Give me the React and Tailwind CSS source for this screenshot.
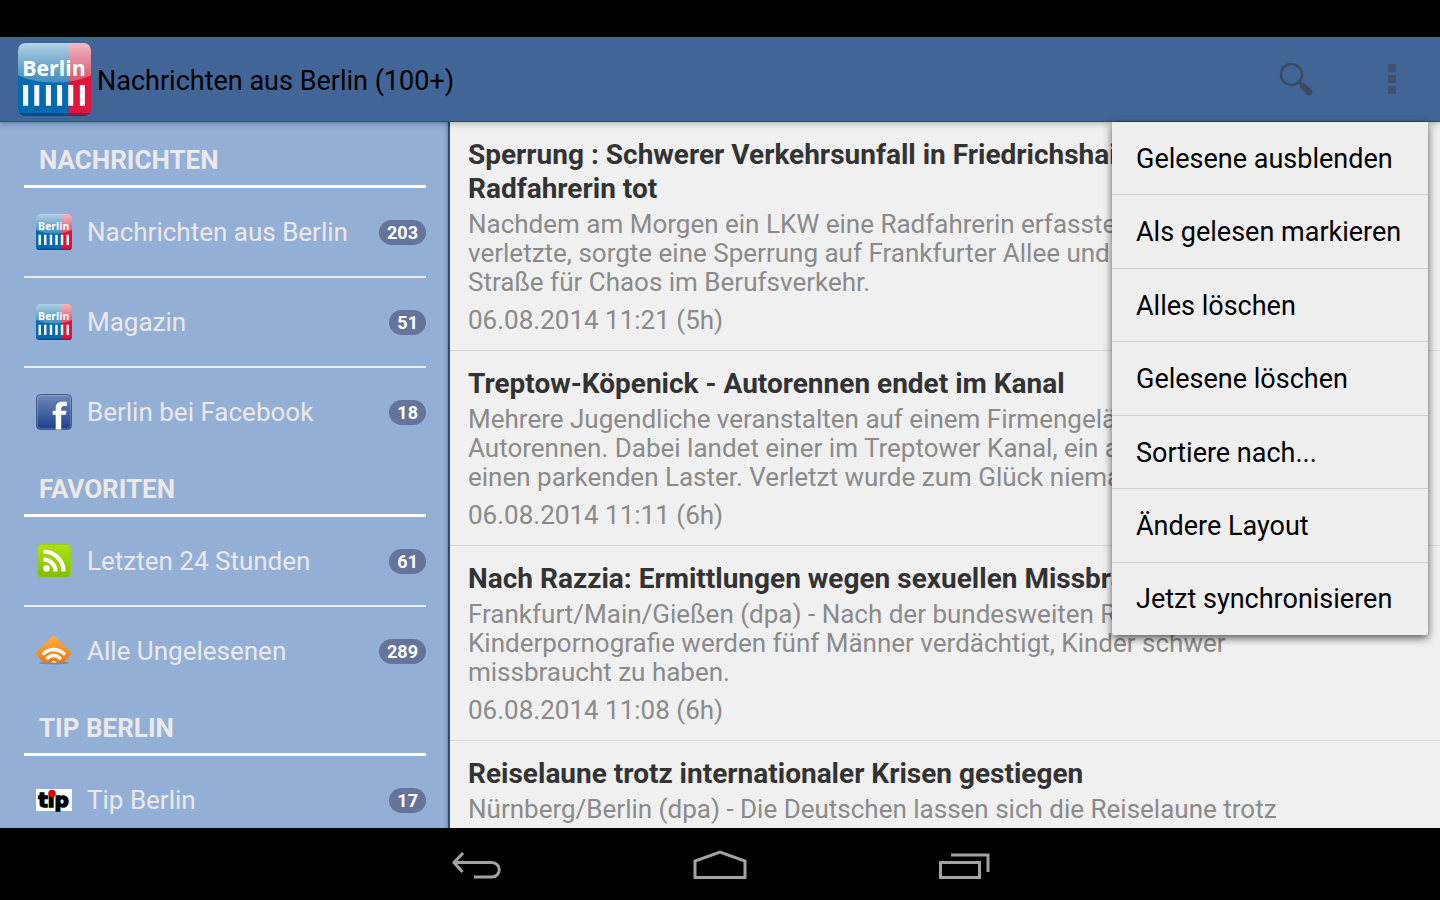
import React from 'react';

const sections = [
	{
		title: 'NACHRICHTEN',
		items: [
			{ name: 'Nachrichten aus Berlin', count: 203, icon: 'berlin' },
			{ name: 'Magazin', count: 51, icon: 'berlin' },
			{ name: 'Berlin bei Facebook', count: 18, icon: 'facebook' },
		],
	},
	{
		title: 'FAVORITEN',
		items: [
			{ name: 'Letzten 24 Stunden', count: 61, icon: 'rss' },
			{ name: 'Alle Ungelesenen', count: 289, icon: 'unread' },
		],
	},
	{
		title: 'TIP BERLIN',
		items: [{ name: 'Tip Berlin', count: 17, icon: 'tip' }],
	},
];

const articles = [
	{
		title: ['Sperrung : Schwerer Verkehrsunfall in Friedrichshain -', 'Radfahrerin tot'],
		text: [
			'Nachdem am Morgen ein LKW eine Radfahrerin erfasste',
			'verletzte, sorgte eine Sperrung auf Frankfurter Allee und P',
			'Straße für Chaos im Berufsverkehr.',
		],
		date: '06.08.2014 11:21 (5h)',
	},
	{
		title: ['Treptow-Köpenick - Autorennen endet im Kanal'],
		text: [
			'Mehrere Jugendliche veranstalten auf einem Firmengelände',
			'Autorennen. Dabei landet einer im Treptower Kanal, ein an',
			'einen parkenden Laster. Verletzt wurde zum Glück niemand.',
		],
		date: '06.08.2014 11:11 (6h)',
	},
	{
		title: ['Nach Razzia: Ermittlungen wegen sexuellen Missbrauchs'],
		text: [
			'Frankfurt/Main/Gießen (dpa) - Nach der bundesweiten Razzia',
			'Kinderpornografie werden fünf Männer verdächtigt, Kinder schwer',
			'missbraucht zu haben.',
		],
		date: '06.08.2014 11:08 (6h)',
	},
	{
		title: ['Reiselaune trotz internationaler Krisen gestiegen'],
		text: ['Nürnberg/Berlin (dpa) - Die Deutschen lassen sich die Reiselaune trotz'],
	},
];

const menuItems = [
	'Gelesene ausblenden',
	'Als gelesen markieren',
	'Alles löschen',
	'Gelesene löschen',
	'Sortiere nach...',
	'Ändere Layout',
	'Jetzt synchronisieren',
];

const BerlinLogo = ({ id, className }) => (
	<svg viewBox="0 0 72 72" className={className} aria-hidden="true">
		<defs>
			<clipPath id={`${id}-clip`}>
				<rect width="72" height="72" rx="7" />
			</clipPath>
			<linearGradient id={`${id}-gloss`} x1="0" y1="0" x2="0" y2="1">
				<stop offset="0" stopColor="#fff" stopOpacity="0.7" />
				<stop offset="1" stopColor="#c8dcd8" stopOpacity="0.32" />
			</linearGradient>
		</defs>
		<g clipPath={`url(#${id}-clip)`}>
			<rect width="72" height="72" fill="#0569b0" />
			<rect x="50" width="22" height="72" fill="#e1143c" />
			<path d="M0 0H72V32Q56 39 36 39Q16 39 0 32Z" fill={`url(#${id}-gloss)`} />
			<path d="M0 70.5H72" stroke="#03325c" strokeOpacity="0.5" strokeWidth="3" />
			<path d="M7.5 41.5V62M18.5 41.5V62M30 41.5V62M41 41.5V62M52 41.5V62M63.500 41.5V62" stroke="#f4f8fb" strokeWidth="5" />
			<text x="35.500" y="32.500" textAnchor="middle" fontFamily="Open Sans, sans-serif" fontWeight="700" fontSize="21" fill="#fff">
				Berlin
			</text>
		</g>
	</svg>
);

const FacebookIcon = () => (
	<svg viewBox="0 0 36 36" className="size-9" aria-hidden="true">
		<defs>
			<linearGradient id="fb" x1="0" y1="0" x2="0" y2="1">
				<stop offset="0" stopColor="#7189bb" />
				<stop offset="1" stopColor="#1c3f88" />
			</linearGradient>
		</defs>
		<rect x="0.500" y="0.500" width="35" height="35" rx="4" fill="url(#fb)" stroke="#40598f" />
		<rect x="1.500" y="1.500" width="33" height="33" rx="3" fill="none" stroke="#fff" strokeOpacity="0.2" />
		<path d="M19.700 35.500V20.700H16.700V16.700H19.700V14.500C19.700 9.800 22 7.800 26 7.800H30.800V12H28C26 12 25.200 12.800 25.200 14.800V16.700H30.500L29.800 20.700H25.200V35.500Z" fill="#fff" />
	</svg>
);

const RssIcon = () => (
	<svg viewBox="0 0 36 36" className="size-9" aria-hidden="true">
		<defs>
			<linearGradient id="rss" x1="0" y1="0" x2="0" y2="1">
				<stop offset="0" stopColor="#b0e018" />
				<stop offset="1" stopColor="#82bd00" />
			</linearGradient>
		</defs>
		<rect x="1.500" y="1.500" width="33" height="33" rx="4" fill="url(#rss)" stroke="#97d010" />
		<circle cx="10.500" cy="25.500" r="3.200" fill="#fff" />
		<path d="M7.500 16.500A12 12 0 0 1 19.500 28.500M7.500 8.500A20 20 0 0 1 27.500 28.500" fill="none" stroke="#fff" strokeWidth="4.200" />
	</svg>
);

const UnreadIcon = () => (
	<svg viewBox="0 0 36 36" className="size-9" aria-hidden="true">
		<defs>
			<linearGradient id="unread" x1="0" y1="0" x2="0" y2="1">
				<stop offset="0" stopColor="#fbb040" />
				<stop offset="1" stopColor="#ee7a14" />
			</linearGradient>
		</defs>
		<ellipse cx="18" cy="30" rx="15" ry="1.500" fill="#40506a" fillOpacity="0.4" />
		<path d="M15.500 4Q17.500 2 19.500 4L34 18.500Q36 20.500 34 22.500L29 28Q27.500 29.500 25.500 29.500H9.500Q7.500 29.500 6 28L1 22.500Q-1 20.500 1 18.500Z" fill="url(#unread)" />
		<path d="M6.500 21.500Q17.500 11.500 29 21.500M10.500 26Q17.500 19 25 26" fill="none" stroke="#fff" strokeWidth="3.200" />
		<path d="M15 29.500Q17.500 26 20.500 29.500Z" fill="#fff" />
	</svg>
);

const TipIcon = () => (
	<svg viewBox="0 0 36 36" className="size-9" aria-hidden="true">
		<rect y="7" width="36" height="22" fill="#fff" />
		<text x="17.500" y="25" textAnchor="middle" fontFamily="DejaVu Sans, sans-serif" fontWeight="700" fontSize="20" stroke="#000" strokeWidth="1.400">
			tıp
		</text>
		<circle cx="16" cy="11.500" r="3.800" fill="#e60000" />
	</svg>
);

const ItemIcon = ({ type, id }) => {
	if (type === 'facebook') return <FacebookIcon />;
	if (type === 'rss') return <RssIcon />;
	if (type === 'unread') return <UnreadIcon />;
	if (type === 'tip') return <TipIcon />;
	return <BerlinLogo id={id} className="size-9" />;
};

const Header = () => (
	<header className="relative z-10 flex h-[85px] shrink-0 items-center border-b border-[#1d4a85] bg-[#406596] pl-[18px] shadow-[0_2px_6px_rgba(0,0,0,0.25)]">
		<BerlinLogo id="app" className="size-[73px]" />
		<h1 className="ml-1.5 flex-1 pt-1 text-[27px] text-black">Nachrichten aus Berlin (100+)</h1>
		<button type="button" aria-label="Suche" className="flex h-full w-24 items-center justify-center">
			<svg viewBox="0 0 34 34" className="size-[34px]" fill="none" stroke="#3b4a60">
				<circle cx="12.500" cy="12.500" r="10.500" strokeWidth="2.400" />
				<path d="M20 20L24 24" strokeWidth="3" />
				<path d="M24.500 24.500L30 30" strokeWidth="6.500" strokeLinejoin="round" strokeLinecap="round" />
			</svg>
		</button>
		<button type="button" aria-label="Weitere Optionen" className="flex h-full w-24 flex-col items-center justify-center gap-[3px]">
			<span className="size-2 bg-[#40526f]" />
			<span className="size-2 bg-[#40526f]" />
			<span className="size-2 bg-[#40526f]" />
		</button>
	</header>
);

const Sidebar = () => (
	<nav className="w-[450px] shrink-0 overflow-hidden border-r-2 border-[#2a4d7c] bg-[#93afd5] pl-6 pr-[22px] pt-[5px] text-[#ece8ea] shadow-[inset_-3px_0_4px_-2px_rgba(30,60,110,0.4)]">
		{sections.map((section) => (
			<section key={section.title}>
				<h2 className="flex h-[61px] items-center border-b-3 border-white px-[15px] pt-2 text-[26px] font-bold">
					{section.title}
				</h2>
				<ul className="divide-y-2 divide-[#e9eef6]">
					{section.items.map((item) => (
						<li key={item.name}>
							<a href="#" className="flex h-[88px] items-center pl-3">
								<ItemIcon type={item.icon} id={item.name.split(' ')[0]} />
								<span className="ml-[15px] flex-1 text-[26px]">{item.name}</span>
								<span className="rounded-full bg-[#66739a] px-2 text-[18px] leading-[25px] font-bold text-white">
									{item.count}
								</span>
							</a>
						</li>
					))}
				</ul>
			</section>
		))}
	</nav>
);

const Article = ({ article }) => (
	<article className="border-b border-[#d6d6d6] px-[18px] pt-4 pb-[15px]">
		<h3 className="text-[28px] leading-[34px] font-bold text-[#333]">
			{article.title.map((line) => (
				<span key={line} className="block whitespace-nowrap">{line}</span>
			))}
		</h3>
		<p className="mt-1 text-[26px] leading-[29px] text-[#8a8a8a]">
			{article.text.map((line) => (
				<span key={line} className="block whitespace-nowrap">{line}</span>
			))}
		</p>
		{article.date && <p className="mt-[9px] text-[26px] leading-[29px] text-[#8a8a8a]">{article.date}</p>}
	</article>
);

const OptionsMenu = () => (
	<ul className="absolute top-0 right-3 z-20 flex h-[513px] w-[316px] flex-col divide-y divide-[#cfcfcf] rounded-b-xs bg-[#eee] shadow-[0_3px_8px_rgba(0,0,0,0.65)]">
		{menuItems.map((item) => (
			<li key={item} className="flex flex-1">
				<button type="button" className="flex w-full items-center px-6 pt-0.5 text-left text-[27px] whitespace-nowrap text-black">
					{item}
				</button>
			</li>
		))}
	</ul>
);

const NavigationBar = () => (
	<footer className="flex h-[72px] shrink-0 items-center justify-center gap-[190px] bg-black text-[#a3a3a3]">
		<button type="button" aria-label="Zurück">
			<svg viewBox="0 0 54 34" className="h-[34px] w-[54px]" fill="none" stroke="currentColor" strokeWidth="3">
				<path d="M5 15.500H43A7.250 7.250 0 0 1 43 30H25M14 6L5 15.500L13.500 25" />
			</svg>
		</button>
		<button type="button" aria-label="Startseite">
			<svg viewBox="0 0 54 34" className="h-[34px] w-[54px]" fill="none" stroke="currentColor" strokeWidth="3">
				<path d="M2 30.500V14L27 5L52 14V30.500Z" />
			</svg>
		</button>
		<button type="button" aria-label="Letzte Apps">
			<svg viewBox="0 0 54 34" className="h-[34px] w-[54px]" fill="none" stroke="currentColor" strokeWidth="3">
				<path d="M3.500 15.500H42.500V30.500H3.500ZM14 8H51V25" />
			</svg>
		</button>
	</footer>
);

const App = () => (
	<div className="flex h-screen flex-col overflow-hidden bg-black pt-[37px] font-['Roboto',sans-serif]">
		<Header />
		<div className="relative flex min-h-0 flex-1">
			<Sidebar />
			<main className="min-w-0 flex-1 overflow-hidden bg-[#f0f0f0]">
				{articles.map((article) => (
					<Article key={article.title[0]} article={article} />
				))}
			</main>
			<OptionsMenu />
		</div>
		<NavigationBar />
	</div>
);

export default App;
